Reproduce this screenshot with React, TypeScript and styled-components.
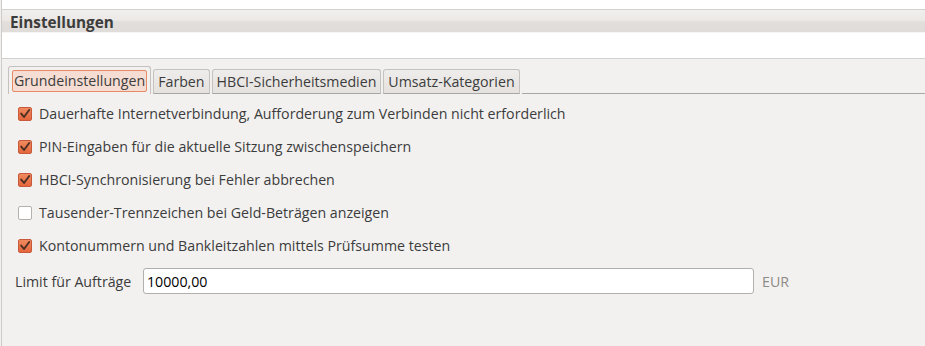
import React from "react";
import styled, { createGlobalStyle } from "styled-components";

const GlobalStyle = createGlobalStyle`
    html, body {
        margin: 0;
        padding: 0;
        background: #f2f1f0;
    }
    body {
        font-family: "Open Sans", "DejaVu Sans", sans-serif;
        font-size: 14.2px;
        color: #3c3c3c;
    }
`;

const options = [
    { label: "Dauerhafte Internetverbindung, Aufforderung zum Verbinden nicht erforderlich", checked: true },
    { label: "PIN-Eingaben für die aktuelle Sitzung zwischenspeichern", checked: true },
    { label: "HBCI-Synchronisierung bei Fehler abbrechen", checked: true },
    { label: "Tausender-Trennzeichen bei Geld-Beträgen anzeigen", checked: false },
    { label: "Kontonummern und Bankleitzahlen mittels Prüfsumme testen", checked: true },
];

const tabs = ["Grundeinstellungen", "Farben", "HBCI-Sicherheitsmedien", "Umsatz-Kategorien"];

const Check = ({ checked }: { checked: boolean }) => (
    <CheckBox $checked={checked}>
        {checked && (
            <svg width="12" height="12" viewBox="0 0 12 12">
                <path d="M2.2 5.6 L5 9 L10.2 2" fill="none" stroke="#4a2f22" strokeWidth="1.9" strokeLinecap="round" strokeLinejoin="round" />
            </svg>
        )}
    </CheckBox>
);

const App = () => {
    return (
        <Window>
            <GlobalStyle />
            <TopStrip />
            <Header>Einstellungen</Header>
            <WhiteBand />
            <Body>
                <TabBar>
                    {tabs.map((t, i) => (
                        <Tab key={t} $active={i === 0}>
                            {i === 0 ? <Focus>{t}</Focus> : t}
                        </Tab>
                    ))}
                    <TabFill />
                </TabBar>
                <Options>
                    {options.map((o) => (
                        <OptionRow key={o.label}>
                            <Check checked={o.checked} />
                            <span>{o.label}</span>
                        </OptionRow>
                    ))}
                    <LimitRow>
                        <LimitLabel>Limit für Aufträge</LimitLabel>
                        <AmountInput defaultValue="10000,00" />
                        <Currency>EUR</Currency>
                    </LimitRow>
                </Options>
            </Body>
        </Window>
    );
};

const Window = styled.div`
    display: flex;
    flex-direction: column;
    width: 925px;
    height: 346px;
    border-left: 1px solid #cdcbc9;
    margin-left: 1px;
    box-sizing: border-box;
    overflow: hidden;
`;

const TopStrip = styled.div`
    height: 9px;
    flex-shrink: 0;
    background: #ffffff;
    border-bottom: 1px solid #d3d1cf;
`;

const Header = styled.div`
    height: 22px;
    flex-shrink: 0;
    padding: 2px 0 0 8px;
    box-sizing: border-box;
    display: flex;
    align-items: center;
    font-weight: 700;
    font-size: 15.3px;
    color: #3c3c3c;
    background: linear-gradient(#f1efed 0%, #ece9e7 45%, #e2dedb 55%, #e0dcd9 100%);
`;

const WhiteBand = styled.div`
    height: 25px;
    flex-shrink: 0;
    background: #ffffff;
    border-top: 1px solid #f6f5f4;
    border-bottom: 1px solid #d3d1cf;
`;

const Body = styled.div`
    flex: 1;
    background: #f2f1f0;
    display: flex;
    flex-direction: column;
`;

const TabBar = styled.div`
    display: flex;
    align-items: flex-end;
    height: 35px;
    flex-shrink: 0;
    padding-left: 6px;
    box-sizing: border-box;
`;

const Tab = styled.div<{ $active: boolean }>`
    height: ${({ $active }) => ($active ? "28px" : "25px")};
    display: flex;
    align-items: center;
    box-sizing: border-box;
    padding: 0 ${({ $active }) => ($active ? "3px" : "4px")};
    margin-right: 2px;
    border: 1px solid #c4c1be;
    border-bottom: ${({ $active }) => ($active ? "none" : "1px solid #a9a7a5")};
    border-radius: 3px 3px 0 0;
    background: ${({ $active }) => ($active ? "#f2f1f0" : "linear-gradient(#efedeb, #e4e1de)")};
    color: #3c3c3c;
    white-space: nowrap;
`;

const Focus = styled.span`
    display: block;
    padding: 0 1px 1px;
    border: 1px solid #e88a64;
    border-radius: 2px;
    background: #f5ddd3;
    margin-top: 1px;
`;

const TabFill = styled.div`
    flex: 1;
    border-bottom: 1px solid #a9a7a5;
    align-self: stretch;
`;

const Options = styled.div`
    display: flex;
    flex-direction: column;
    padding: 3px 0 0 16px;
`;

const OptionRow = styled.label`
    display: flex;
    align-items: center;
    gap: 7px;
    height: 33px;
`;

const CheckBox = styled.span<{ $checked: boolean }>`
    width: 14px;
    height: 14px;
    box-sizing: border-box;
    border-radius: 2px;
    display: flex;
    align-items: center;
    justify-content: center;
    border: 1px solid ${({ $checked }) => ($checked ? "#c8593a" : "#b3b0ad")};
    background: ${({ $checked }) => ($checked ? "linear-gradient(#f08a5e, #e4663d)" : "#ffffff")};
`;

const LimitRow = styled.div`
    display: flex;
    align-items: center;
    margin: 6px 0 0 -3px;
`;

const LimitLabel = styled.span`
    width: 128px;
`;

const AmountInput = styled.input`
    width: 611px;
    height: 26px;
    box-sizing: border-box;
    border: 1px solid #b2afac;
    border-radius: 3px;
    background: #ffffff;
    padding: 0 3px;
    font-family: "Open Sans", "DejaVu Sans", sans-serif;
    font-size: 14.2px;
    color: #000000;
    outline: none;
`;

const Currency = styled.span`
    margin-left: 8px;
    color: #8e8a86;
`;

export default App;
